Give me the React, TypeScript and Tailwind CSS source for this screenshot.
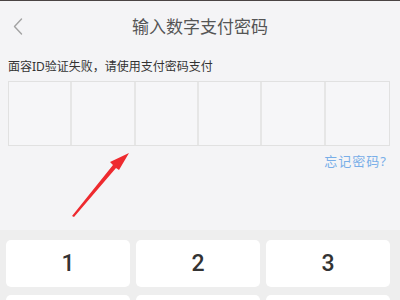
import React from "react";

const font = { fontFamily: '"Noto Sans", "Noto Sans CJK SC", sans-serif' };

export default function App() {
  // only the first row's labels show; the second row is cut by the window edge
  const keys = ["1", "2", "3", "", "", ""];

  return (
    <div className="relative w-[400px] h-[300px] overflow-hidden bg-[#f4f4f6] flex flex-col" style={font}>
      <div className="h-[1px] bg-[#4a4444] shrink-0" />

      {/* header */}
      <div className="relative h-[51px] shrink-0 flex items-center justify-center">
        <svg className="absolute left-[13px] top-[17px]" width="10" height="17" viewBox="0 0 10 17" fill="none">
          <path d="M8.5 1 L1.5 8.5 L8.5 16" stroke="#a3a3a3" strokeWidth="1.4" strokeLinecap="round" strokeLinejoin="round" />
        </svg>
        <span className="text-[17px] text-[#555] leading-none -mt-[1px]">输入数字支付密码</span>
      </div>

      {/* password area */}
      <div className="px-2">
        <p className="text-[12px] leading-[16px] text-[#333] mt-[7px]">面容ID验证失败，请使用支付密码支付</p>
        <div className="mt-[6px] w-[382px] h-[65px] grid grid-cols-6 border border-[#e1e1e1] divide-x-2 divide-[#e6e6e6] bg-[#f6f6f8]">
          {[0, 1, 2, 3, 4, 5].map((i) => (
            <div key={i} />
          ))}
        </div>
        <div className="flex justify-end pr-[5px] mt-[6px]">
          <span className="text-[13px] leading-[18px] text-[#78aee8] tracking-[1px]">忘记密码?</span>
        </div>
      </div>

      <div className="flex-1" />

      {/* keypad */}
      <div className="h-[70px] shrink-0 bg-[#eeeeee] pl-[6px] pr-[10px] pt-[10px] grid grid-cols-3 gap-x-[6px] gap-y-[8px] content-start">
        {keys.map((k, i) => (
          <div key={i} className="h-[47px] rounded-[5px] bg-white flex items-center justify-center">
            {k && (
              <span className="text-[23px] leading-none text-[#333] font-medium" style={{ fontFamily: "Roboto, sans-serif" }}>{k}</span>
            )}
          </div>
        ))}
      </div>

      {/* annotation arrow */}
      <svg className="absolute left-0 top-0 pointer-events-none" width="400" height="300" viewBox="0 0 400 300">
        <polygon points="72,216 74,217 116,168 119,170 129,153 110,162 113,165" fill="#ee2a2f" />
      </svg>
    </div>
  );
}
